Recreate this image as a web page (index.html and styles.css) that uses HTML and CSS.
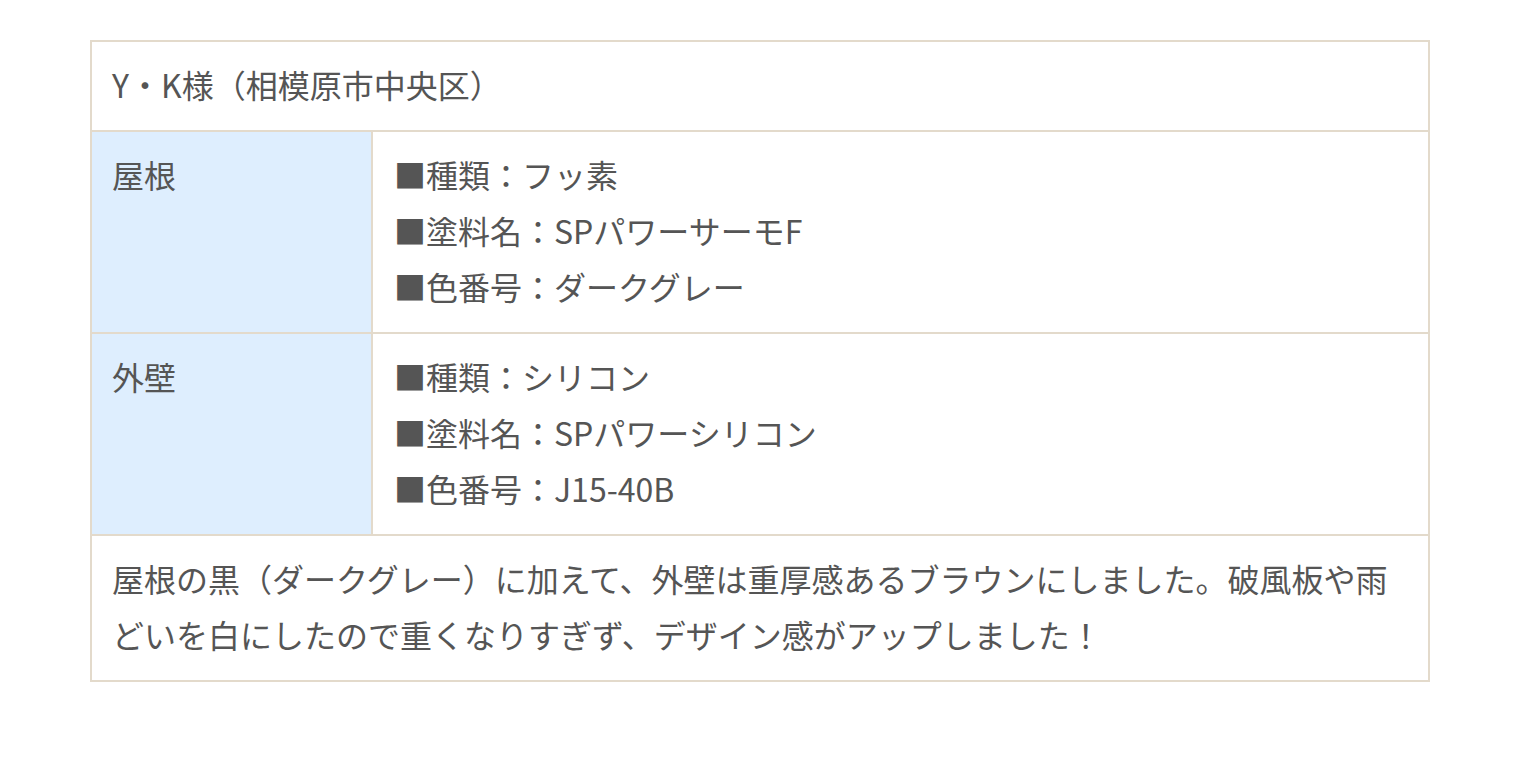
FILE: index.html
```html
<!DOCTYPE html>
<html lang="ja">
<head>
<meta charset="utf-8">
<title>施工事例</title>
<link rel="stylesheet" href="styles.css">
</head>
<body>
<div class="wrap">
  <table class="spec">
    <colgroup><col class="c-label"><col class="c-body"></colgroup>
    <tr><th class="head" colspan="2">Y・K様（相模原市中央区）</th></tr>
    <tr>
      <th class="label">屋根</th>
      <td class="body">■種類：フッ素<br>■塗料名：SPパワーサーモF<br>■色番号：ダークグレー</td>
    </tr>
    <tr>
      <th class="label">外壁</th>
      <td class="body">■種類：シリコン<br>■塗料名：SPパワーシリコン<br>■色番号：J15-40B</td>
    </tr>
    <tr><td class="note" colspan="2">屋根の黒（ダークグレー）に加えて、外壁は重厚感あるブラウンにしました。破風板や雨どいを白にしたので重くなりすぎず、デザイン感がアップしました！</td></tr>
  </table>
</div>
</body>
</html>
```

FILE: styles.css
```css
html, body {
  margin: 0;
  background: #ffffff;
}
body {
  font-family: "Noto Sans CJK JP", "Noto Sans", sans-serif;
  color: #555555;
  font-size: 32px;
  line-height: 56px;
}
.wrap {
  padding: 40px 90px;
}
.spec {
  width: 100%;
  border-collapse: collapse;
  table-layout: fixed;
  border: 2px solid #e3dacb;
}
.c-label { width: 281px; }
.spec th, .spec td {
  border: 2px solid #e3dacb;
  padding: 14px 22px 18px 20px;
  text-align: left;
  vertical-align: top;
  font-weight: normal;
}
.spec .label {
  background: #deeefe;
}
.spec .body {
  padding-left: 21px;
}
```
